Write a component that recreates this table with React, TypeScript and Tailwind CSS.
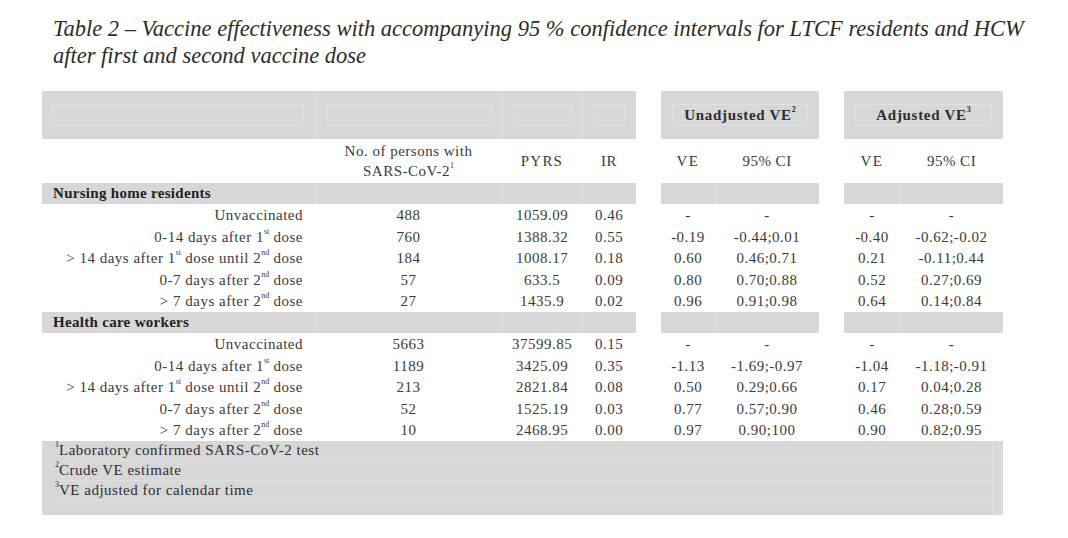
import React from 'react';

// column template: label | N | PYRS | IR | gap | VE | CI | gap | aVE | aCI
const COLS = 'grid grid-cols-[273px_187px_80px_54px_25px_54px_104px_25px_56px_103px]';

type Row = {
  label: React.ReactNode;
  n: string;
  pyrs: string;
  ir: string;
  ve: string;
  ci: string;
  ave: string;
  aci: string;
};

const Sup = ({ children }: { children: React.ReactNode }) => (
  <sup className="text-[8px] relative -top-[2px] align-super leading-none tracking-normal">{children}</sup>
);

const nursing: Row[] = [
  { label: 'Unvaccinated', n: '488', pyrs: '1059.09', ir: '0.46', ve: '-', ci: '-', ave: '-', aci: '-' },
  { label: <>0-14 days after 1<Sup>st</Sup> dose</>, n: '760', pyrs: '1388.32', ir: '0.55', ve: '-0.19', ci: '-0.44;0.01', ave: '-0.40', aci: '-0.62;-0.02' },
  { label: <>&gt; 14 days after 1<Sup>st</Sup> dose until 2<Sup>nd</Sup> dose</>, n: '184', pyrs: '1008.17', ir: '0.18', ve: '0.60', ci: '0.46;0.71', ave: '0.21', aci: '-0.11;0.44' },
  { label: <>0-7 days after 2<Sup>nd</Sup> dose</>, n: '57', pyrs: '633.5', ir: '0.09', ve: '0.80', ci: '0.70;0.88', ave: '0.52', aci: '0.27;0.69' },
  { label: <>&gt; 7 days after 2<Sup>nd</Sup> dose</>, n: '27', pyrs: '1435.9', ir: '0.02', ve: '0.96', ci: '0.91;0.98', ave: '0.64', aci: '0.14;0.84' },
];

const hcw: Row[] = [
  { label: 'Unvaccinated', n: '5663', pyrs: '37599.85', ir: '0.15', ve: '-', ci: '-', ave: '-', aci: '-' },
  { label: <>0-14 days after 1<Sup>st</Sup> dose</>, n: '1189', pyrs: '3425.09', ir: '0.35', ve: '-1.13', ci: '-1.69;-0.97', ave: '-1.04', aci: '-1.18;-0.91' },
  { label: <>&gt; 14 days after 1<Sup>st</Sup> dose until 2<Sup>nd</Sup> dose</>, n: '213', pyrs: '2821.84', ir: '0.08', ve: '0.50', ci: '0.29;0.66', ave: '0.17', aci: '0.04;0.28' },
  { label: <>0-7 days after 2<Sup>nd</Sup> dose</>, n: '52', pyrs: '1525.19', ir: '0.03', ve: '0.77', ci: '0.57;0.90', ave: '0.46', aci: '0.28;0.59' },
  { label: <>&gt; 7 days after 2<Sup>nd</Sup> dose</>, n: '10', pyrs: '2468.95', ir: '0.00', ve: '0.97', ci: '0.90;100', ave: '0.90', aci: '0.82;0.95' },
];

function HeadCell({ children, edge }: { children?: React.ReactNode; edge?: boolean }) {
  return (
    <div className={`bg-[#d7d7d7] h-[48px] px-[11px] py-[13px] ${edge ? 'border-l border-[#e2e2e2]' : ''}`}>
      <div className="h-full border border-[#e1e1e1] flex items-center justify-center font-bold text-[#2e2e2e] text-[15px] tracking-[0.7px]">
        {children}
      </div>
    </div>
  );
}

function SectionRow({ title }: { title: string }) {
  const g = 'bg-[#d7d7d7] h-[21px]';
  return (
    <div className={COLS}>
      <div className={`${g} pl-[11px] font-bold text-[15px] leading-[21px] text-[#222] tracking-[0.3px] whitespace-nowrap`}>{title}</div>
      <div className={`${g} border-l border-[#e2e2e2]`} />
      <div className={`${g} border-l border-[#e2e2e2]`} />
      <div className={`${g} border-l border-[#e2e2e2]`} />
      <div />
      <div className={`${g}`} />
      <div className={`${g} border-l border-[#e2e2e2]`} />
      <div />
      <div className={`${g}`} />
      <div className={`${g} border-l border-[#e2e2e2]`} />
    </div>
  );
}

function DataRow({ r }: { r: Row }) {
  const c = 'text-center';
  return (
    <div className={`${COLS} h-[21.6px] items-center text-[15px] tracking-[0.5px] text-[#3a3a3a]`}>
      <div className="text-right pr-[12px] whitespace-nowrap">{r.label}</div>
      <div className={c}>{r.n}</div>
      <div className={c}>{r.pyrs}</div>
      <div className={c}>{r.ir}</div>
      <div />
      <div className={c}>{r.ve}</div>
      <div className={c}>{r.ci}</div>
      <div />
      <div className={c}>{r.ave}</div>
      <div className={c}>{r.aci}</div>
    </div>
  );
}

export default function App() {
  return (
    <div className="w-[1068px] h-[538px] bg-white overflow-hidden font-['Liberation_Serif',serif]">
      <div className="h-[91px] pl-[53px] pt-[15px]">
        <p className="italic text-[22.5px] leading-[27px] text-[#2b2b2b] whitespace-nowrap">
          Table 2 – Vaccine effectiveness with accompanying 95 % confidence intervals for LTCF residents and HCW
          <br />
          after first and second vaccine dose
        </p>
      </div>

      <div className="ml-[42px] w-[961px]">
        <div className={COLS}>
          <HeadCell />
          <HeadCell edge />
          <HeadCell edge />
          <HeadCell edge />
          <div />
          <div className="col-span-2">
            <HeadCell>
              <span>Unadjusted VE<Sup>2</Sup></span>
            </HeadCell>
          </div>
          <div />
          <div className="col-span-2">
            <HeadCell>
              <span>Adjusted VE<Sup>3</Sup></span>
            </HeadCell>
          </div>
        </div>

        <div className={`${COLS} h-[44px] items-center text-[15px] tracking-[0.5px] text-[#3a3a3a]`}>
          <div />
          <div className="text-center leading-[20px]">
            No. of persons with
            <br />
            SARS-CoV-2<Sup>1</Sup>
          </div>
          <div className="text-center tracking-[1.2px]">PYRS</div>
          <div className="text-center">IR</div>
          <div />
          <div className="text-center tracking-[1.5px]">VE</div>
          <div className="text-center">95% CI</div>
          <div />
          <div className="text-center tracking-[1.5px]">VE</div>
          <div className="text-center">95% CI</div>
        </div>

        <SectionRow title="Nursing home residents" />
        {nursing.map((r, i) => (
          <DataRow key={i} r={r} />
        ))}

        <SectionRow title="Health care workers" />
        {hcw.map((r, i) => (
          <DataRow key={i} r={r} />
        ))}

        <div className="bg-[#d7d7d7] h-[74px] flex">
          <div className="flex-1 text-[15px] tracking-[0.5px] text-[#2e2e2e] leading-[19px] pl-[13px]">
            <div className="border-b border-[#e0e0e0]"><Sup>1</Sup>Laboratory confirmed SARS-CoV-2 test</div>
            <div className="border-b border-[#e0e0e0]"><Sup>2</Sup>Crude VE estimate</div>
            <div className="border-b border-[#e0e0e0]"><Sup>3</Sup>VE adjusted for calendar time</div>
          </div>
          <div className="w-[11px] bg-[#dadada] border-l border-[#e2e2e2]" />
        </div>
      </div>
    </div>
  );
}
